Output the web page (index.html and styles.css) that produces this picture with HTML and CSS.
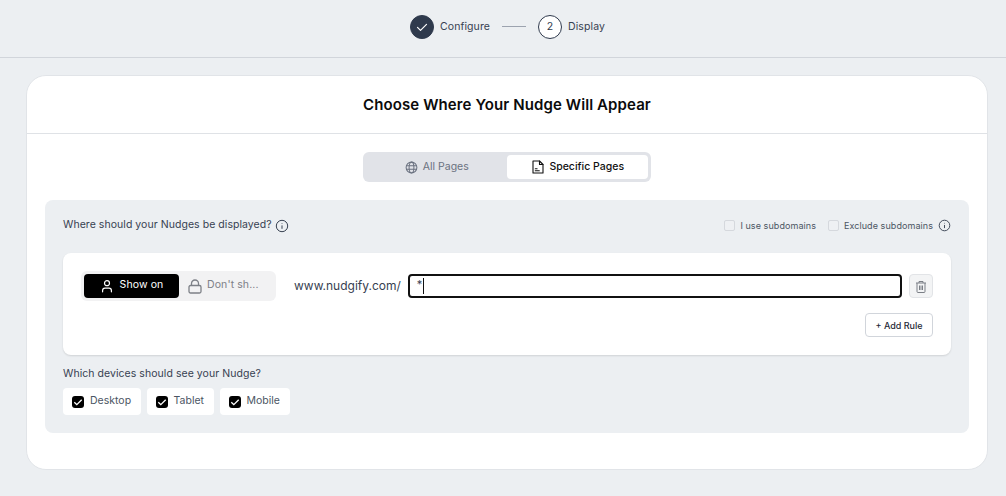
FILE: index.html
```html
<!DOCTYPE html>
<html lang="en">
<head>
<meta charset="utf-8">
<title>Nudge display</title>
<link rel="stylesheet" href="styles.css">
</head>
<body>
<header class="stepper">
  <div class="step">
    <span class="step-dot done"><svg width="14" height="14" viewBox="0 0 14 14"><path d="M2.500 7.400l3 3 6-6" fill="none" stroke="#fff" stroke-width="1.200" stroke-linecap="round" stroke-linejoin="round"/></svg></span>
    <span class="step-label">Configure</span>
  </div>
  <span class="step-line"></span>
  <div class="step">
    <span class="step-dot">2</span>
    <span class="step-label">Display</span>
  </div>
</header>
<main class="card">
  <h1 class="card-title">Choose Where Your Nudge Will Appear</h1>
  <div class="card-body">
    <div class="tabs">
      <div class="tab">
        <svg width="13" height="13" viewBox="0 0 14 14" fill="none" stroke="#6b7280" stroke-width="1.100"><circle cx="7" cy="7" r="5.800"/><ellipse cx="7" cy="7" rx="2.600" ry="5.800"/><path d="M1.600 5h10.800M1.600 9h10.800"/></svg>
        <span>All Pages</span>
      </div>
      <div class="tab active">
        <svg width="12" height="14" viewBox="0 0 12 14" fill="none" stroke="#111" stroke-width="1.100" stroke-linejoin="round" stroke-linecap="round"><path d="M1 1h6.500l3.500 3.500v8.500h-10z"/><path d="M7.500 1v3.500h3.500M3.300 10.800h4M3.300 8.800h1.800"/></svg>
        <span>Specific Pages</span>
      </div>
    </div>
    <section class="panel">
      <div class="panel-head">
        <div class="question">
          <span>Where should your Nudges be displayed?</span>
          <svg class="info" width="14" height="14" viewBox="0 0 14 14" fill="none" stroke="#374151" stroke-width="1"><circle cx="7" cy="7" r="5.700"/><path d="M7 6.400v3.400M7 4.200v.6"/></svg>
        </div>
        <div class="options">
          <label class="option"><span class="box"></span>I use subdomains</label>
          <label class="option"><span class="box"></span>Exclude subdomains
            <svg width="13" height="13" viewBox="0 0 14 14" fill="none" stroke="#374151" stroke-width="1"><circle cx="7" cy="7" r="5.700"/><path d="M7 6.400v3.400M7 4.200v.6"/></svg>
          </label>
        </div>
      </div>
      <div class="rule-card">
        <div class="rule-row">
          <div class="toggle">
            <div class="toggle-item on">
              <svg width="14" height="14" viewBox="0 0 14 14" fill="none" stroke="#fff" stroke-width="1.200" stroke-linecap="round"><circle cx="7" cy="4.200" r="2.500"/><path d="M2.600 12.800v-1.300c0-1.400 1-2.300 2.300-2.300h4.200c1.300 0 2.300.9 2.300 2.300v1.300"/></svg>
              <span>Show on</span>
            </div>
            <div class="toggle-item off">
              <svg width="14" height="15" viewBox="0 0 14 15" fill="none" stroke="#7d8087" stroke-width="1.300"><rect x="1" y="6.500" width="12" height="7.500" rx="1.500"/><path d="M3.500 6.500V4.500a3.500 3.500 0 0 1 7 0v2"/></svg>
              <span>Don't sh...</span>
            </div>
          </div>
          <span class="domain">www.nudgify.com/</span>
          <div class="url-input"><span>*</span><i class="caret"></i></div>
          <button class="trash" type="button" aria-label="Delete">
            <svg width="12" height="13" viewBox="0 0 12 13" fill="none" stroke="#7b7f86" stroke-width="1"><path d="M1 3h10M4 3V1.500h4V3M2 3v8.500a1 1 0 0 0 1 1h6a1 1 0 0 0 1-1V3"/><path d="M4.500 5.500v4.500M6 5.500v4.500M7.500 5.500v4.500"/></svg>
          </button>
        </div>
        <div class="rule-actions"><button class="add" type="button">+ Add Rule</button></div>
      </div>
      <h2 class="devices-title">Which devices should see your Nudge?</h2>
      <div class="devices">
        <label class="device"><span class="check"><svg width="12" height="12" viewBox="0 0 12 12"><path d="M2.300 6.200l2.500 2.500 4.900-5" fill="none" stroke="#fff" stroke-width="1.300"/></svg></span><span class="device-name">Desktop</span></label>
        <label class="device"><span class="check"><svg width="12" height="12" viewBox="0 0 12 12"><path d="M2.300 6.200l2.500 2.500 4.900-5" fill="none" stroke="#fff" stroke-width="1.300"/></svg></span><span class="device-name">Tablet</span></label>
        <label class="device"><span class="check"><svg width="12" height="12" viewBox="0 0 12 12"><path d="M2.300 6.200l2.500 2.500 4.900-5" fill="none" stroke="#fff" stroke-width="1.300"/></svg></span><span class="device-name">Mobile</span></label>
      </div>
    </section>
  </div>
</main>
</body>
</html>
```
FILE: styles.css
```css
* { box-sizing: border-box; }
html, body { margin: 0; padding: 0; }
body {
  width: 1006px;
  height: 496px;
  overflow: hidden;
  background: #ecEff2;
  font-family: Inter, "Liberation Sans", sans-serif;
  color: #374151;
}
.stepper {
  height: 58px;
  border-bottom: 1px solid #d1d5db;
  display: flex;
  align-items: center;
  justify-content: center;
  gap: 12px;
  padding-left: 9px;
  padding-bottom: 4px;
  opacity: .999;
}
.step { display: flex; align-items: center; gap: 6px; }
.step-dot {
  width: 24px;
  height: 24px;
  border-radius: 50%;
  border: 1px solid #2f3a4d;
  background: #fff;
  color: #2f3a4d;
  font-size: 10.500px;
  display: flex;
  align-items: center;
  justify-content: center;
}
.step-dot.done { background: #2f3a4d; }
.step-label { font-size: 10.500px; line-height: 12px; color: #374151; letter-spacing: .1px; }
.step-line { width: 24px; height: 1px; background: #9ca3af; }
.card {
  margin: 17px 0 0 26px;
  width: 962px;
  height: 395px;
  background: #fff;
  border: 1px solid #e1e4e8;
  border-radius: 20px;
  opacity: .999;
}
.card-title {
  margin: 0;
  height: 58px;
  padding-bottom: 1px;
  border-bottom: 1px solid #dfe2e6;
  display: flex;
  align-items: center;
  justify-content: center;
  font-size: 15px;
  font-weight: 600;
  color: #0b0b0b;
  letter-spacing: .1px;
}
.card-body { padding: 18px 18px 0; display: flex; flex-direction: column; align-items: center; }
.tabs {
  width: 288px;
  height: 30px;
  padding: 3px;
  background: #e1e3e8;
  border-radius: 6px;
  display: flex;
}
.tab {
  flex: 1;
  display: flex;
  align-items: center;
  justify-content: center;
  gap: 5px;
  padding-left: 1px;
  font-size: 10.500px;
  color: #6b7280;
  border-radius: 4px;
}
.tab span { margin-top: -2px; }
.tab.active { background: #fff; color: #111; font-weight: 500; padding-left: 2px; }
.panel {
  width: 924px;
  height: 233px;
  margin-top: 18px;
  background: #ecEff2;
  border-radius: 8px;
  padding: 0 18px;
}
.panel-head {
  height: 53px;
  padding-bottom: 2px;
  display: flex;
  align-items: center;
  justify-content: space-between;
}
.question { display: flex; align-items: center; gap: 3.500px; font-size: 10.500px; color: #374151; font-weight: 400; letter-spacing: .05px; }
.question span { margin-top: -2px; }
.options { display: flex; align-items: center; gap: 12px; }
.option { display: flex; align-items: center; gap: 5px; font-size: 9px; color: #4b5563; letter-spacing: .07px; }
.box { width: 11px; height: 11px; border: 1px solid #d5d8dd; border-radius: 2px; background: #eef0f3; }
.rule-card {
  height: 102px;
  background: #fff;
  border-radius: 8px;
  box-shadow: 0 1px 2px rgba(0, 0, 0, .12);
  padding: 18px 18px 0;
}
.rule-row { display: flex; align-items: center; height: 30px; }
.toggle {
  width: 195px;
  height: 30px;
  padding: 3px;
  background: #f2f2f3;
  border-radius: 6px;
  display: flex;
  gap: 4px;
}
.toggle-item {
  display: flex;
  align-items: center;
  justify-content: center;
  gap: 5px;
  font-size: 10.500px;
  color: #7d8087;
  letter-spacing: .1px;
}
.toggle-item span { margin-top: -3px; }
.toggle-item.on { width: 95px; background: #000; color: #fff; border-radius: 4px; gap: 6px; }
.toggle-item.off { margin-left: 5px; }
.domain { margin-left: 18px; font-size: 12px; color: #374151; margin-top: -1px; }
.url-input {
  margin-left: 7px;
  width: 494px;
  height: 24px;
  border: 2px solid #111;
  border-radius: 4px;
  padding-left: 7px;
  display: flex;
  align-items: flex-start;
  font-size: 11px;
  color: #374151;
}
.url-input span { line-height: 17px; }
.caret { width: 1px; height: 16px; background: #111; margin-top: 2px; margin-left: 1px; }
.trash {
  margin-left: 7px;
  width: 24px;
  height: 24px;
  padding: 0;
  border: 1px solid #e2e4e7;
  border-radius: 4px;
  background: #f3f4f5;
  display: flex;
  align-items: center;
  justify-content: center;
}
.rule-actions { display: flex; justify-content: flex-end; margin-top: 12px; }
.add {
  width: 68px;
  height: 24px;
  padding: 0;
  border: 1px solid #d1d5db;
  border-radius: 4px;
  background: #fff;
  font: 500 9px Inter, "Liberation Sans", sans-serif;
  color: #1f2937;
}
.devices-title { margin: 11px 0 0; font-size: 10.500px; font-weight: 400; color: #374151; line-height: 15px; letter-spacing: .05px; }
.devices { display: flex; gap: 5.500px; margin-top: 7px; }
.device {
  height: 27px;
  padding: 0 10px 0 9px;
  background: #fff;
  border-radius: 4px;
  display: flex;
  align-items: center;
  gap: 6px;
  font-size: 10.500px;
  color: #4b5563;
}
.device-name { margin-top: -2px; }
.check {
  width: 12px;
  height: 12px;
  background: #000;
  border-radius: 3px;
  display: flex;
}
```
